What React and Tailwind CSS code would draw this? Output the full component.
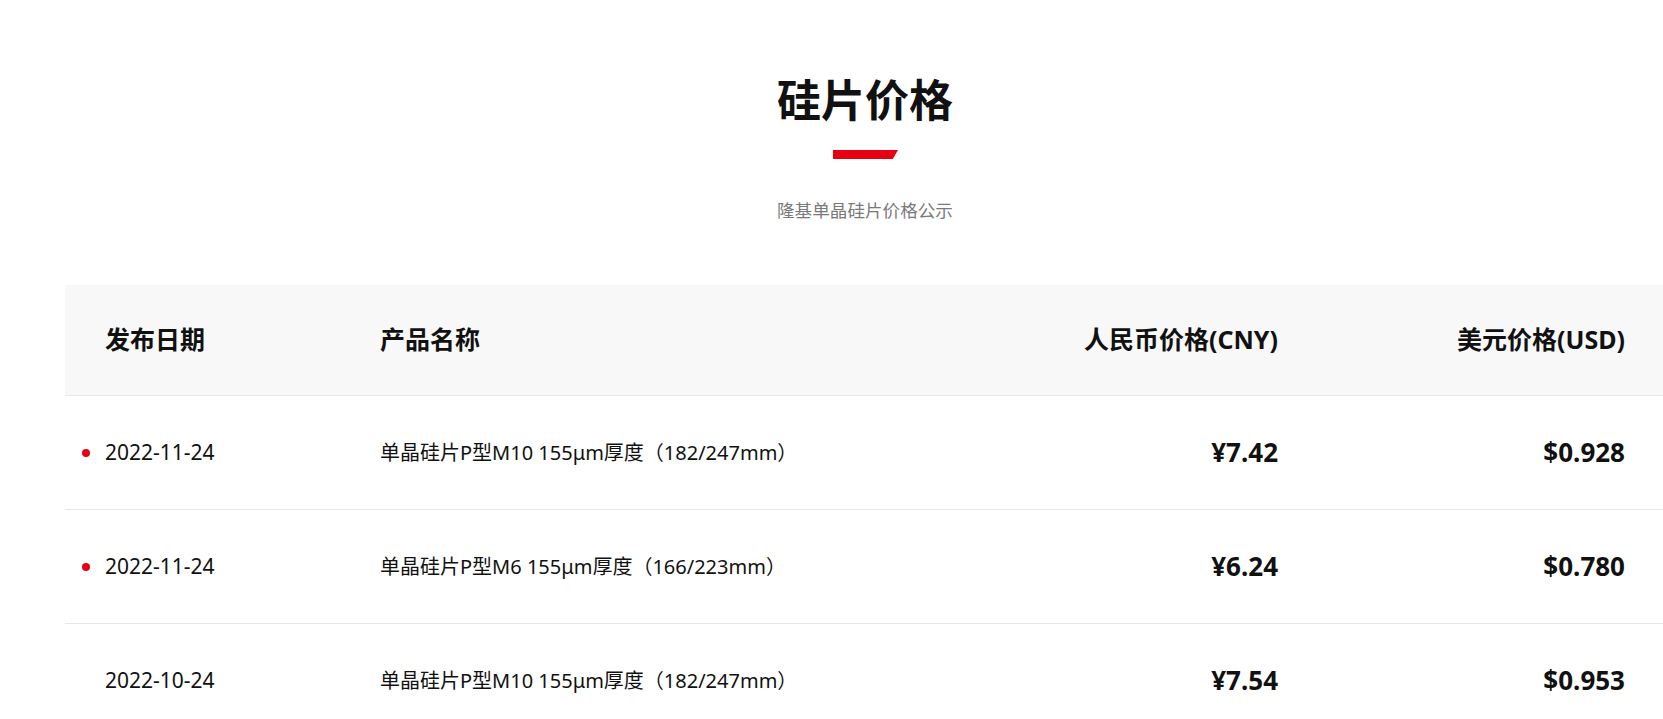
import React from 'react';

const rows = [
    { date: '2022-11-24', name: '单晶硅片P型M10 155μm厚度（182/247mm）', cny: '¥7.42', usd: '$0.928', fresh: true },
    { date: '2022-11-24', name: '单晶硅片P型M6 155μm厚度（166/223mm）', cny: '¥6.24', usd: '$0.780', fresh: true },
    { date: '2022-10-24', name: '单晶硅片P型M10 155μm厚度（182/247mm）', cny: '¥7.54', usd: '$0.953', fresh: false },
];

const App = () => {
    return (
        <div className="w-full overflow-x-hidden bg-white font-['Noto_Sans','Noto_Sans_CJK_SC',sans-serif]">
            <div className="w-[1600px] ml-[65px] pt-[70px]">
                <h1 className="text-center text-[44px] leading-[60px] font-bold text-[#111]">硅片价格</h1>
                <div className="mt-[20px] flex justify-center">
                    <div className="ml-[1px] w-[65px] h-[9px] bg-[#e60012] [clip-path:polygon(0_0,100%_0,92%_100%,0_100%)]" />
                </div>
                <p className="mt-[39px] text-center text-[17.6px] leading-[24px] text-[#7a7a7a]">隆基单晶硅片价格公示</p>

                <div className="mt-[63px]">
                    <div className="grid grid-cols-[275px_598px_300px_347px] items-center h-[111px] px-[40px] bg-[#f8f8f8] border-b border-[#e8e8e8] text-[25px] font-bold text-[#111]">
                        <div>发布日期</div>
                        <div>产品名称</div>
                        <div className="text-right">人民币价格(CNY)</div>
                        <div className="text-right">美元价格(USD)</div>
                    </div>
                    {rows.map((r, i) => (
                        <PriceRow key={i} row={r} />
                    ))}
                </div>
            </div>
        </div>
    );
};

const PriceRow = ({ row }) => (
    <div className="grid grid-cols-[275px_598px_300px_347px] items-center h-[114px] px-[40px] border-b border-[#e8e8e8] text-[#111]">
        <div className="relative text-[21px]">
            {row.fresh && (
                <span className="absolute left-[-23px] top-1/2 -translate-y-1/2 w-[8px] h-[8px] rounded-full bg-[#e60012]" />
            )}
            {row.date}
        </div>
        <div className="text-[20px]">{row.name}</div>
        <div className="text-right text-[26px] font-bold">{row.cny}</div>
        <div className="text-right text-[26px] font-bold">{row.usd}</div>
    </div>
);

export default App;
